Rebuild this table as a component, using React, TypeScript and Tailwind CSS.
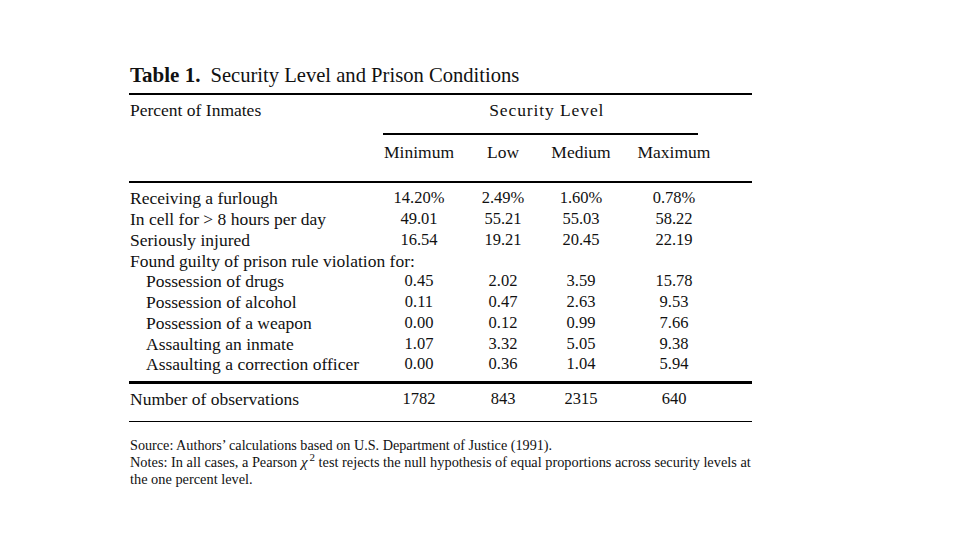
import React from "react";

type Row = { label: string; indent?: boolean; vals?: string[] };

const rows: Row[] = [
  { label: "Receiving a furlough", vals: ["14.20%", "2.49%", "1.60%", "0.78%"] },
  { label: "In cell for > 8 hours per day", vals: ["49.01", "55.21", "55.03", "58.22"] },
  { label: "Seriously injured", vals: ["16.54", "19.21", "20.45", "22.19"] },
  { label: "Found guilty of prison rule violation for:" },
  { label: "Possession of drugs", indent: true, vals: ["0.45", "2.02", "3.59", "15.78"] },
  { label: "Possession of alcohol", indent: true, vals: ["0.11", "0.47", "2.63", "9.53"] },
  { label: "Possession of a weapon", indent: true, vals: ["0.00", "0.12", "0.99", "7.66"] },
  { label: "Assaulting an inmate", indent: true, vals: ["1.07", "3.32", "5.05", "9.38"] },
  { label: "Assaulting a correction officer", indent: true, vals: ["0.00", "0.36", "1.04", "5.94"] },
];

const grid = "grid grid-cols-[248px_84px_84px_72px_114px]";

export default function App() {
  return (
    <div
      className="w-[960px] h-[540px] bg-white text-[#111] overflow-hidden"
      style={{ fontFamily: '"Liberation Serif", "Times New Roman", serif' }}
    >
      <div className="ml-[129px] w-[623px] pt-[63px]">
        <div className="h-[24px] leading-[24px] whitespace-nowrap pl-[1px]">
          <span className="font-bold text-[21px]">Table 1.</span>
          <span className="ml-[10px] text-[20.6px]">Security Level and Prison Conditions</span>
        </div>
        <div className="mt-[6px] h-[2px] bg-black" />
        <div className="mt-[5px] h-[20px] leading-[20px] text-[17.5px] flex">
          <span className="pl-[1px]">Percent of Inmates</span>
          <span className="ml-[228px] tracking-[0.9px]">Security Level</span>
        </div>
        <div className="mt-[13px] ml-[254px] w-[315px] h-[2px] bg-black" />
        <div className={`${grid} mt-[7px] h-[20px] leading-[20px] text-[17.5px]`}>
          <div />
          <div className="text-center">Minimum</div>
          <div className="text-center">Low</div>
          <div className="text-center">Medium</div>
          <div className="text-center">Maximum</div>
        </div>
        <div className="mt-[19px] h-[2px] bg-black" />
        <div className="mt-[5px]">
          {rows.map((r) => (
            <div key={r.label} className={`${grid} h-[20.75px] items-center`}>
              <div
                className={`text-[17.5px] leading-[20px] whitespace-nowrap ${
                  r.indent ? "pl-[17px]" : "pl-[1px]"
                }`}
              >
                {r.label}
              </div>
              {r.vals
                ? r.vals.map((v, i) => (
                    <div key={i} className="text-center text-[16.5px] leading-[20px]">
                      {v}
                    </div>
                  ))
                : null}
            </div>
          ))}
        </div>
        <div className="mt-[6px] h-[3px] bg-black" />
        <div className={`${grid} mt-[5px] h-[20px] leading-[20px] items-center`}>
          <div className="text-[17.5px] pl-[1px]">Number of observations</div>
          <div className="text-center text-[16.5px]">1782</div>
          <div className="text-center text-[16.5px]">843</div>
          <div className="text-center text-[16.5px]">2315</div>
          <div className="text-center text-[16.5px]">640</div>
        </div>
        <div className="mt-[12px] h-[1px] bg-black" />
        <div className="mt-[15px] leading-[17px] pl-[1px] whitespace-nowrap">
          <div className="text-[14.2px]">
            Source: Authors’ calculations based on U.S. Department of Justice (1991).
          </div>
          <div className="text-[14.35px]">
            Notes: In all cases, a Pearson <i className="text-[15px]">χ</i>
            <sup className="text-[11px] leading-none ml-[2px]">2</sup> test rejects the null hypothesis of equal
            proportions across security levels at
            <br />
            the one percent level.
          </div>
        </div>
      </div>
    </div>
  );
}
